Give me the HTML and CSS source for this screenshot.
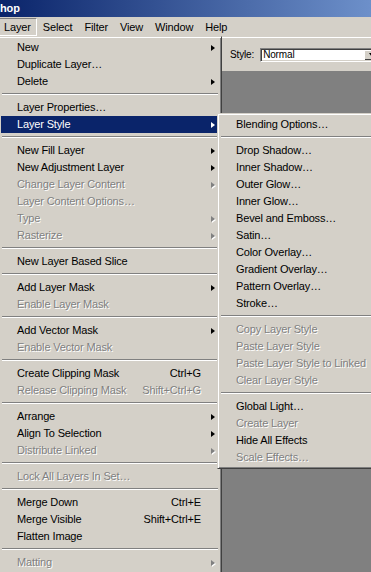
FILE: index.html
```html
<!DOCTYPE html>
<html>
<head>
<meta charset="utf-8">
<link rel="stylesheet" href="styles.css">
</head>
<body>
<div class="app">
  <div class="titlebar">hop</div>
  <div class="menubar">
    <span class="mb on">Layer</span>
    <span class="mb">Select</span>
    <span class="mb">Filter</span>
    <span class="mb">View</span>
    <span class="mb">Window</span>
    <span class="mb">Help</span>
  </div>
  <div class="options">
    <span class="opt-label">Style:</span>
    <div class="combo"><span class="combo-text">Normal</span><span class="combo-btn"><span class="down"></span></span></div>
  </div>
  <div class="canvas"></div>
</div>

<div class="menu main">
  <div class="row"><span class="lbl">New</span><span class="ar"></span></div>
  <div class="row"><span class="lbl">Duplicate Layer…</span></div>
  <div class="row"><span class="lbl">Delete</span><span class="ar"></span></div>
  <div class="sep"></div>
  <div class="row"><span class="lbl">Layer Properties…</span></div>
  <div class="row hl"><span class="lbl">Layer Style</span><span class="ar"></span></div>
  <div class="sep"></div>
  <div class="row"><span class="lbl">New Fill Layer</span><span class="ar"></span></div>
  <div class="row"><span class="lbl">New Adjustment Layer</span><span class="ar"></span></div>
  <div class="row dis"><span class="lbl">Change Layer Content</span><span class="ar"></span></div>
  <div class="row dis"><span class="lbl">Layer Content Options…</span></div>
  <div class="row dis"><span class="lbl">Type</span><span class="ar"></span></div>
  <div class="row dis"><span class="lbl">Rasterize</span><span class="ar"></span></div>
  <div class="sep"></div>
  <div class="row"><span class="lbl">New Layer Based Slice</span></div>
  <div class="sep"></div>
  <div class="row"><span class="lbl">Add Layer Mask</span><span class="ar"></span></div>
  <div class="row dis"><span class="lbl">Enable Layer Mask</span></div>
  <div class="sep"></div>
  <div class="row"><span class="lbl">Add Vector Mask</span><span class="ar"></span></div>
  <div class="row dis"><span class="lbl">Enable Vector Mask</span></div>
  <div class="sep"></div>
  <div class="row"><span class="lbl">Create Clipping Mask</span><span class="key">Ctrl+G</span></div>
  <div class="row dis"><span class="lbl">Release Clipping Mask</span><span class="key">Shift+Ctrl+G</span></div>
  <div class="sep"></div>
  <div class="row"><span class="lbl">Arrange</span><span class="ar"></span></div>
  <div class="row"><span class="lbl">Align To Selection</span><span class="ar"></span></div>
  <div class="row dis"><span class="lbl">Distribute Linked</span><span class="ar"></span></div>
  <div class="sep"></div>
  <div class="row dis"><span class="lbl">Lock All Layers In Set…</span></div>
  <div class="sep"></div>
  <div class="row"><span class="lbl">Merge Down</span><span class="key">Ctrl+E</span></div>
  <div class="row"><span class="lbl">Merge Visible</span><span class="key">Shift+Ctrl+E</span></div>
  <div class="row"><span class="lbl">Flatten Image</span></div>
  <div class="sep"></div>
  <div class="row dis"><span class="lbl">Matting</span><span class="ar"></span></div>
</div>

<div class="menu sub">
  <div class="row"><span class="lbl">Blending Options…</span></div>
  <div class="sep"></div>
  <div class="row"><span class="lbl">Drop Shadow…</span></div>
  <div class="row"><span class="lbl">Inner Shadow…</span></div>
  <div class="row"><span class="lbl">Outer Glow…</span></div>
  <div class="row"><span class="lbl">Inner Glow…</span></div>
  <div class="row"><span class="lbl">Bevel and Emboss…</span></div>
  <div class="row"><span class="lbl">Satin…</span></div>
  <div class="row"><span class="lbl">Color Overlay…</span></div>
  <div class="row"><span class="lbl">Gradient Overlay…</span></div>
  <div class="row"><span class="lbl">Pattern Overlay…</span></div>
  <div class="row"><span class="lbl">Stroke…</span></div>
  <div class="sep"></div>
  <div class="row dis"><span class="lbl">Copy Layer Style</span></div>
  <div class="row dis"><span class="lbl">Paste Layer Style</span></div>
  <div class="row dis"><span class="lbl">Paste Layer Style to Linked</span></div>
  <div class="row dis"><span class="lbl">Clear Layer Style</span></div>
  <div class="sep"></div>
  <div class="row"><span class="lbl">Global Light…</span></div>
  <div class="row dis"><span class="lbl">Create Layer</span></div>
  <div class="row"><span class="lbl">Hide All Effects</span></div>
  <div class="row dis"><span class="lbl">Scale Effects…</span></div>
</div>
</body>
</html>
```
FILE: styles.css
```css
html, body {
  margin: 0;
  padding: 0;
}
body {
  width: 371px;
  height: 572px;
  overflow: hidden;
  position: relative;
  background: #d4d0c8;
  font-family: "Liberation Sans", Arial, sans-serif;
  font-size: 11px;
  letter-spacing: -0.15px;
  color: #000;
}
.app {
  display: flex;
  flex-direction: column;
  height: 572px;
}
.titlebar {
  height: 17px;
  line-height: 17px;
  flex: none;
  background: linear-gradient(90deg, #0a246a 0%, #6d90ca 100%);
  color: #fff;
  font-weight: bold;
  padding-left: 0;
  white-space: nowrap;
}
.menubar {
  height: 20px;
  flex: none;
  box-sizing: border-box;
  padding-top: 1px;
  margin-left: -2px;
  display: flex;
}
.mb {
  height: 18px;
  box-sizing: border-box;
  line-height: 16px;
  padding: 0 5px;
  border: 1px solid transparent;
  white-space: nowrap;
}
.mb.on {
  border-color: #808080 #fff #fff #808080;
}
.options {
  height: 34px;
  flex: none;
  box-sizing: border-box;
  border-top: 1px solid #fff;
  display: flex;
  align-items: center;
  gap: 6px;
  padding-left: 230px;
  font-size: 10px;
}
.combo {
  flex: none;
  width: 118px;
  height: 10px;
  padding: 1px;
  border: 1px solid;
  border-color: #808080 #fff #fff #808080;
  box-shadow: inset 1px 1px #404040, inset -1px -1px #d4d0c8;
  background: #fff;
  display: flex;
}
.combo-text {
  flex: 1;
  line-height: 10px;
  padding-left: 1px;
}
.combo-btn {
  flex: none;
  width: 16px;
  height: 10px;
  background: #d4d0c8;
  box-shadow: inset 1px 1px #fff, inset -1px -1px #404040;
  display: flex;
  align-items: center;
  padding-left: 5px;
  box-sizing: border-box;
}
.down {
  width: 0;
  height: 0;
  border-top: 4px solid #000;
  border-left: 3.5px solid transparent;
  border-right: 3.5px solid transparent;
}
.canvas {
  flex: 1;
  background: #808080;
}

.menu {
  position: absolute;
  background: #d4d0c8;
  border: 1px solid;
  border-color: #d4d0c8 #404040 #404040 #d4d0c8;
  box-shadow: inset 1px 1px #fff, inset -1px -1px #808080;
  padding: 2px;
}
.menu.main {
  left: -2px;
  top: 36px;
  width: 218px;
}
.menu.sub {
  left: 217px;
  top: 113px;
  width: 200px;
}
.row {
  height: 17px;
  line-height: 17px;
  display: flex;
  align-items: center;
  padding: 0 4px 0 16px;
  white-space: nowrap;
}
.lbl {
  flex: 1;
}
.key {
  margin-right: 14px;
}
.ar {
  flex: none;
  width: 0;
  height: 0;
  border-left: 4px solid currentColor;
  border-top: 3.5px solid transparent;
  border-bottom: 3.5px solid transparent;
}
.row.hl {
  background: #0a246a;
  color: #fff;
}
.row.dis {
  color: #808080;
  text-shadow: 1px 1px 0 #fff;
}
.row.dis .ar {
  filter: drop-shadow(1px 1px 0 #fff);
}
.sep {
  height: 9px;
  box-sizing: border-box;
  padding-top: 3px;
}
.sep::after {
  content: "";
  display: block;
  margin: 0 1px;
  border-top: 1px solid #808080;
  border-bottom: 1px solid #fff;
}
```
